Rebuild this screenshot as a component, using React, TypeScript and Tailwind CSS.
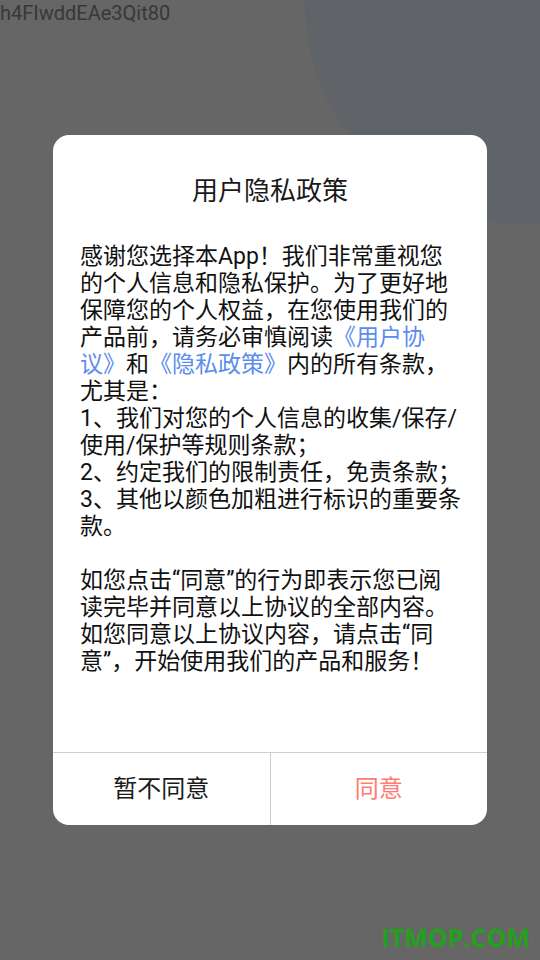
const LINK = "text-[#5b8cf0]";

export default function App() {
  const font = { fontFamily: 'Roboto, "Noto Sans CJK SC", sans-serif' };
  return (
    <div
      className="relative w-[540px] h-[960px] overflow-hidden bg-[#666666]"
      style={font}
    >
      {/* page underneath the overlay */}
      <div className="absolute left-[305px] top-[-219px] w-[444px] h-[444px] rounded-full bg-[#606367]" />
      <div className="relative text-[20px] leading-[28px] text-[#383838] -mt-[1px]">
        h4FIwddEAe3Qit80
      </div>

      {/* dialog */}
      <div className="absolute inset-0 flex items-center justify-center">
        <div className="w-[434px] h-[690px] bg-white rounded-[16px] flex flex-col overflow-hidden">
          <div className="pt-[38px] text-center text-[26px] leading-[36px] text-[#1a1a1a]">
            用户隐私政策
          </div>
          <div className="flex-1 pt-[34px] pl-[27px] pr-[20px] text-[23px] leading-[27px] text-[#111111] whitespace-nowrap">
            <p>
              感谢您选择本App！我们非常重视您
              <br />
              的个人信息和隐私保护。为了更好地
              <br />
              保障您的个人权益，在您使用我们的
              <br />
              产品前，请务必审慎阅读<span className={LINK}>《用户协</span>
              <br />
              <span className={LINK}>议》</span>和<span className={LINK}>《隐私政策》</span>内的所有条款，
              <br />
              尤其是：
            </p>
            <p>
              1、我们对您的个人信息的收集/保存/
              <br />
              使用/保护等规则条款；
            </p>
            <p>2、约定我们的限制责任，免责条款；</p>
            <p>
              3、其他以颜色加粗进行标识的重要条
              <br />
              款。
            </p>
            <p className="mt-[27px]">
              如您点击“同意”的行为即表示您已阅
              <br />
              读完毕并同意以上协议的全部内容。
              <br />
              如您同意以上协议内容，请点击“同
              <br />
              意”，开始使用我们的产品和服务！
            </p>
          </div>
          <div className="flex h-[73px] border-t border-[#cfcfcf]">
            <button className="flex-1 flex items-center justify-center text-[24px] text-[#1a1a1a] border-r border-[#cfcfcf]">
              暂不同意
            </button>
            <button className="flex-1 flex items-center justify-center text-[24px] text-[#ff7c72]">
              同意
            </button>
          </div>
        </div>
      </div>

      {/* watermark */}
      <div
        className="absolute right-[10px] bottom-[4px] text-[25px] font-bold text-[#22a11a]"
        style={{ fontFamily: '"Open Sans", sans-serif' }}
      >
        ITMOP.COM
      </div>
    </div>
  );
}
